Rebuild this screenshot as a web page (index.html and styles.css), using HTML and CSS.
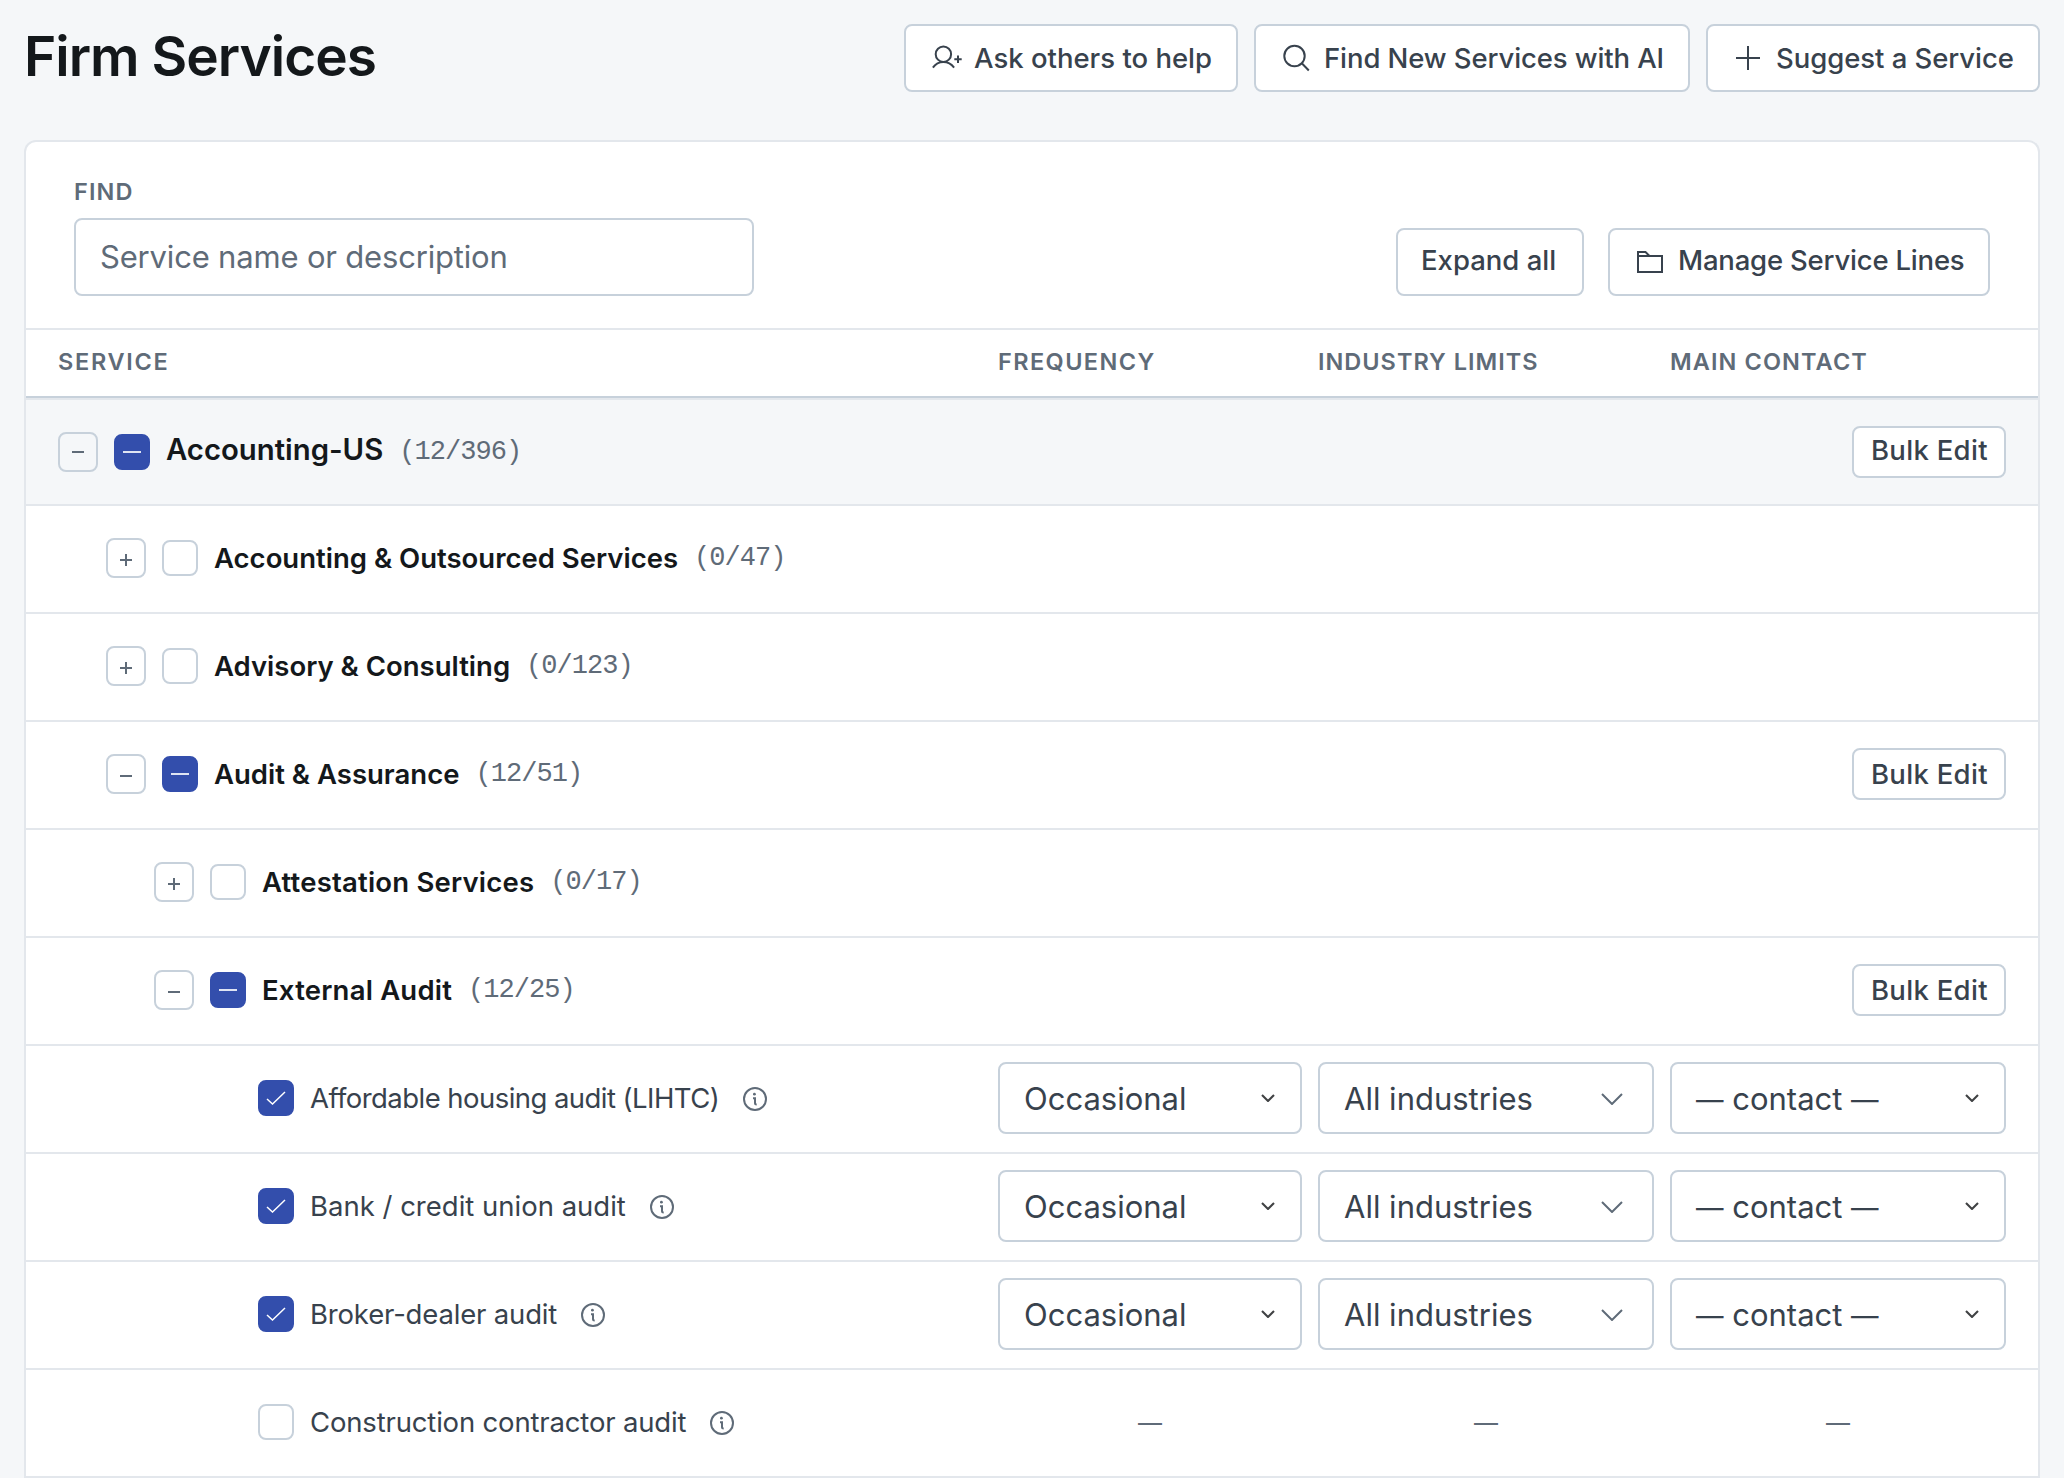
FILE: index.html
```html
<!DOCTYPE html>
<html lang="en">
<head>
    <meta charset="UTF-8">
    <title>Firm Services</title>
    <link rel="stylesheet" href="styles.css">
</head>
<body>
    <!-- Shared icons -->
    <svg class="sprite" width="0" height="0">
        <symbol id="icon-user-plus" viewBox="0 0 32 32">
            <circle cx="13.4" cy="12.2" r="7.7"/>
            <path d="M2.9 25.6C5.2 22.3 9 20 13.4 20s8.2 2.3 10.7 5.6M28 13.6v7.4M24.3 17.3h7.4"/>
        </symbol>
        <symbol id="icon-search" viewBox="0 0 32 32">
            <circle cx="14.5" cy="14" r="10.2"/>
            <path d="M21.8 21.3l7 7.2"/>
        </symbol>
        <symbol id="icon-plus" viewBox="0 0 32 32">
            <path d="M16 4v24M4 16h24"/>
        </symbol>
        <symbol id="icon-folder" viewBox="0 0 32 32">
            <path d="M4 10h24v16H4zM4 10V6h7.5l4 4"/>
        </symbol>
        <symbol id="icon-info" viewBox="0 0 24 24">
            <circle cx="12" cy="12" r="11"/>
            <circle class="dot" cx="11.4" cy="7.2" r="1.4"/>
            <path d="M10 11.2h2v4.8q0 1.5 1.7 1.5"/>
        </symbol>
        <symbol id="icon-check" viewBox="0 0 20 14">
            <path d="M1 8l5.5 5L19 1"/>
        </symbol>
        <symbol id="icon-chevron" viewBox="0 0 14 8">
            <path d="M1 1l6 6 6-6"/>
        </symbol>
        <symbol id="icon-chevron-lg" viewBox="0 0 22 12">
            <path d="M1 1l10 10L21 1"/>
        </symbol>
        <symbol id="icon-expand" viewBox="0 0 12 12">
            <path d="M6 0v12M0 6h12"/>
        </symbol>
        <symbol id="icon-collapse" viewBox="0 0 12 12">
            <path d="M0 6h12"/>
        </symbol>
    </svg>

    <header class="page-header">
        <h1>Firm Services</h1>
        <div class="actions">
            <button class="btn btn-ask"><svg class="icon"><use href="#icon-user-plus"/></svg>Ask others to help</button>
            <button class="btn btn-find"><svg class="icon"><use href="#icon-search"/></svg>Find New Services with AI</button>
            <button class="btn btn-suggest"><svg class="icon"><use href="#icon-plus"/></svg>Suggest a Service</button>
        </div>
    </header>

    <main class="card">
        <div class="toolbar">
            <div class="field">
                <label class="label" for="find">Find</label>
                <input id="find" type="text" placeholder="Service name or description">
            </div>
            <div class="toolbar-actions">
                <button class="btn btn-expand"><span>Expand all</span></button>
                <button class="btn btn-manage"><svg class="icon"><use href="#icon-folder"/></svg><span>Manage Service Lines</span></button>
            </div>
        </div>

        <div class="grid head label">
            <div class="head-service">Service</div>
            <div class="head-frequency">Frequency</div>
            <div class="head-industry">Industry limits</div>
            <div>Main contact</div>
        </div>

        <div class="group root">
            <button class="toggle"><svg><use href="#icon-collapse"/></svg></button>
            <span class="check partial"></span>
            <span class="title">Accounting-US</span>
            <span class="count">(12/396)</span>
            <button class="btn btn-bulk">Bulk Edit</button>
        </div>

        <div class="group level-1">
            <button class="toggle"><svg><use href="#icon-expand"/></svg></button>
            <span class="check"></span>
            <span class="title">Accounting &amp; Outsourced Services</span>
            <span class="count">(0/47)</span>
        </div>

        <div class="group level-1">
            <button class="toggle"><svg><use href="#icon-expand"/></svg></button>
            <span class="check"></span>
            <span class="title">Advisory &amp; Consulting</span>
            <span class="count">(0/123)</span>
        </div>

        <div class="group level-1">
            <button class="toggle"><svg><use href="#icon-collapse"/></svg></button>
            <span class="check partial"></span>
            <span class="title">Audit &amp; Assurance</span>
            <span class="count">(12/51)</span>
            <button class="btn btn-bulk">Bulk Edit</button>
        </div>

        <div class="group level-2">
            <button class="toggle"><svg><use href="#icon-expand"/></svg></button>
            <span class="check"></span>
            <span class="title">Attestation Services</span>
            <span class="count">(0/17)</span>
        </div>

        <div class="group level-2">
            <button class="toggle"><svg><use href="#icon-collapse"/></svg></button>
            <span class="check partial"></span>
            <span class="title">External Audit</span>
            <span class="count">(12/25)</span>
            <button class="btn btn-bulk">Bulk Edit</button>
        </div>

        <div class="grid service">
            <div class="service-name">
                <span class="check checked"><svg><use href="#icon-check"/></svg></span>
                <span class="name tight">Affordable housing audit (LIHTC)</span>
                <svg class="info"><use href="#icon-info"/></svg>
            </div>
            <button class="select">Occasional<svg class="chevron"><use href="#icon-chevron"/></svg></button>
            <button class="select">All industries<svg class="chevron-lg"><use href="#icon-chevron-lg"/></svg></button>
            <button class="select"><span><span class="dash">—</span> contact <span class="dash">—</span></span><svg class="chevron"><use href="#icon-chevron"/></svg></button>
        </div>

        <div class="grid service">
            <div class="service-name">
                <span class="check checked"><svg><use href="#icon-check"/></svg></span>
                <span class="name">Bank / credit union audit</span>
                <svg class="info"><use href="#icon-info"/></svg>
            </div>
            <button class="select">Occasional<svg class="chevron"><use href="#icon-chevron"/></svg></button>
            <button class="select">All industries<svg class="chevron-lg"><use href="#icon-chevron-lg"/></svg></button>
            <button class="select"><span><span class="dash">—</span> contact <span class="dash">—</span></span><svg class="chevron"><use href="#icon-chevron"/></svg></button>
        </div>

        <div class="grid service">
            <div class="service-name">
                <span class="check checked"><svg><use href="#icon-check"/></svg></span>
                <span class="name snug">Broker-dealer audit</span>
                <svg class="info"><use href="#icon-info"/></svg>
            </div>
            <button class="select">Occasional<svg class="chevron"><use href="#icon-chevron"/></svg></button>
            <button class="select">All industries<svg class="chevron-lg"><use href="#icon-chevron-lg"/></svg></button>
            <button class="select"><span><span class="dash">—</span> contact <span class="dash">—</span></span><svg class="chevron"><use href="#icon-chevron"/></svg></button>
        </div>

        <div class="grid service">
            <div class="service-name">
                <span class="check"></span>
                <span class="name snug">Construction contractor audit</span>
                <svg class="info"><use href="#icon-info"/></svg>
            </div>
            <div class="none">—</div>
            <div class="none">—</div>
            <div class="none">—</div>
        </div>
    </main>
</body>
</html>
```
FILE: styles.css
```css
* {
    box-sizing: border-box;
}

body {
    margin: 0;
    padding: 24px 24px 0;
    background-color: #f5f7f9;
    color: #38424d;
    font-family: Inter, "Liberation Sans", sans-serif;
    font-size: 27.5px;
}

button, input {
    font: inherit;
    color: inherit;
    margin: 0;
}

svg {
    fill: none;
    stroke: currentColor;
    stroke-width: 2;
    flex: none;
}

.sprite {
    position: absolute;
}

.dot {
    fill: currentColor;
    stroke: none;
}

/* Header */
.page-header {
    display: flex;
    justify-content: space-between;
    align-items: center;
    height: 68px;
    margin-bottom: 48px;
}

h1 {
    margin: 0;
    padding-bottom: 4px;
    color: #14181b;
    font-size: 55px;
    font-weight: 600;
    line-height: 64px;
    letter-spacing: -1px;
}

.actions {
    display: flex;
    gap: 16px;
}

.btn {
    display: flex;
    align-items: center;
    gap: 12px;
    height: 68px;
    padding: 0 24px;
    border: 2px solid #c7d1db;
    border-radius: 8px;
    background-color: #fff;
    font-weight: 500;
    line-height: 40px;
    white-space: nowrap;
    cursor: pointer;
}

.icon {
    width: 32px;
    height: 32px;
}

.btn-ask {
    width: 334px;
}

.btn-find {
    width: 436px;
    letter-spacing: -0.1px;
}

.btn-suggest {
    width: 334px;
    letter-spacing: -0.05px;
}

/* Card */
.card {
    border: 2px solid #e3e7ec;
    border-bottom: 0;
    border-radius: 12px 12px 0 0;
    background-color: #fff;
}

.toolbar {
    display: flex;
    justify-content: space-between;
    align-items: flex-end;
    height: 188px;
    padding: 32px 48px;
    border-bottom: 2px solid #e3e7ec;
}

.field {
    display: flex;
    flex-direction: column;
    gap: 8px;
    width: 680px;
}

.label {
    color: #5f6b78;
    font-size: 23.5px;
    font-weight: 600;
    line-height: 36px;
    letter-spacing: 1.1px;
    text-transform: uppercase;
}

.field input {
    height: 78px;
    padding: 0 24px 2px;
    border: 2px solid #c7d1db;
    border-radius: 8px;
    background-color: #fff;
    font-size: 31px;
    letter-spacing: -0.18px;
}

.field input::placeholder {
    color: #5f6b78;
}

.toolbar-actions {
    display: flex;
    gap: 24px;
}

.toolbar-actions span {
    padding-bottom: 4px;
}

.btn-expand {
    width: 188px;
    padding: 0 23px;
}

.btn-manage {
    width: 382px;
    letter-spacing: -0.2px;
}

/* Table */
.grid {
    display: grid;
    grid-template-columns: 1fr 304px 336px 336px;
    column-gap: 16px;
    align-items: center;
    padding: 0 32px;
}

.head {
    height: 68px;
    padding-bottom: 3px;
    border-bottom: 2px solid #c7d1db;
}

.head-service {
    letter-spacing: 1.7px;
}

.head-frequency {
    letter-spacing: 1.4px;
}

.head-industry {
    letter-spacing: 1px;
}

.group {
    display: flex;
    align-items: center;
    gap: 16px;
    height: 108px;
    padding: 0 32px 2px;
    border-bottom: 2px solid #e3e7ec;
}

.root {
    padding-bottom: 0;
    border-top: 2px solid #e3e7ec;
    background-color: #f5f7f9;
}

.level-1 {
    padding-left: 80px;
}

.level-2 {
    padding-left: 128px;
}

.toggle {
    display: flex;
    align-items: center;
    justify-content: center;
    width: 40px;
    height: 40px;
    padding: 4px 0 0;
    border: 2px solid #c7d1db;
    border-radius: 8px;
    background-color: transparent;
    color: #5f6b78;
}

.toggle svg {
    width: 12px;
    height: 12px;
}

.root .toggle {
    padding-top: 0;
}

.check {
    display: flex;
    align-items: center;
    justify-content: center;
    flex: none;
    width: 36px;
    height: 36px;
    border: 2px solid #c7d1db;
    border-radius: 8px;
    background-color: #fff;
}

.checked, .partial {
    border-color: #334eac;
    background-color: #334eac;
    color: #fff;
}

.checked svg {
    width: 20px;
    height: 14px;
    stroke-width: 1.5;
}

.partial::before {
    content: "";
    width: 18px;
    height: 2px;
    background-color: #dfe4f3;
}

.title {
    color: #14181b;
    font-weight: 600;
    line-height: 40px;
    white-space: nowrap;
}

.root .title {
    padding-bottom: 4px;
    font-size: 29.3px;
}

.level-2 .title {
    letter-spacing: 0.2px;
}

.count {
    color: #5f6b78;
    font-family: "Liberation Mono", monospace;
    font-size: 27px;
    letter-spacing: -0.95px;
}

.btn-bulk {
    height: 52px;
    width: 154px;
    margin-left: auto;
    padding: 0 16px 0 17px;
    letter-spacing: 0.3px;
}

.root .btn-bulk {
    padding-bottom: 4px;
}

/* Service rows */
.service {
    height: 108px;
    padding-bottom: 2px;
    border-bottom: 2px solid #e3e7ec;
}

.service-name {
    display: flex;
    align-items: center;
    gap: 16px;
    padding-left: 200px;
}

.name {
    line-height: 40px;
    white-space: nowrap;
}

.tight {
    letter-spacing: -0.55px;
}

.snug {
    letter-spacing: -0.17px;
}

.info {
    width: 24px;
    height: 24px;
    margin: 2px 0 0 8px;
    color: #5f6b78;
}

.select {
    display: flex;
    align-items: center;
    justify-content: space-between;
    height: 72px;
    padding: 1px 24px 0;
    border: 2px solid #c7d1db;
    border-radius: 8px;
    background-color: #fff;
    font-size: 31px;
    white-space: nowrap;
}

.dash {
    font-size: 27.5px;
}

.chevron {
    width: 14px;
    height: 8px;
    margin: 0 1px 2px 0;
    color: #404244;
    stroke-width: 2.1;
}

.chevron-lg {
    width: 22px;
    height: 12px;
    margin-right: 5px;
    color: #5f6b78;
}

.none {
    color: #5f6b78;
    font-size: 24px;
    text-align: center;
}
```
